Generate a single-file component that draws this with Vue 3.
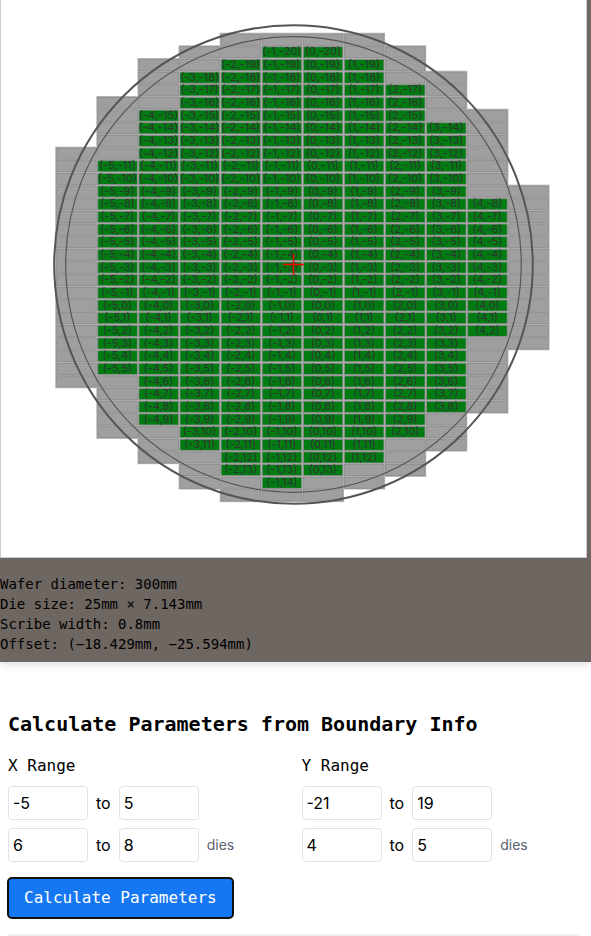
<script setup>
import { ref } from 'vue'

const center = { x: 293.5, y: 264.5 }
const origin = { x: 302.4, y: 299.1 }
const pitch = { x: 41.1, y: 12.66 }

// Rows covered by each column: all dies, then the complete ones.
const columns = [
  { i: -6, all: [-12, 6] },
  { i: -5, all: [-16, 10], full: [-11, 5] },
  { i: -4, all: [-19, 12], full: [-15, 9] },
  { i: -3, all: [-20, 14], full: [-18, 11] },
  { i: -2, all: [-21, 15], full: [-19, 13] },
  { i: -1, all: [-21, 15], full: [-20, 14] },
  { i: 0, all: [-21, 15], full: [-20, 13] },
  { i: 1, all: [-21, 14], full: [-19, 12] },
  { i: 2, all: [-20, 13], full: [-17, 10] },
  { i: 3, all: [-18, 11], full: [-14, 8] },
  { i: 4, all: [-15, 8], full: [-8, 2] },
  { i: 5, all: [-9, 3] }
]

const dies = columns.flatMap(({ i, all, full }) => {
  const list = []
  for (let j = all[0]; j <= all[1]; j++) {
    list.push({
      key: `${i},${j}`,
      x: origin.x + i * pitch.x,
      y: origin.y + j * pitch.y,
      full: Boolean(full) && j >= full[0] && j <= full[1]
    })
  }
  return list
})
const fullDies = dies.filter((d) => d.full)

const specs = [
  'Wafer diameter: 300mm',
  'Die size: 25mm × 7.143mm',
  'Scribe width: 0.8mm',
  'Offset: (−18.429mm, −25.594mm)'
]

const ranges = ref([
  { axis: 'X', rows: [{ from: '-5', to: '5' }, { from: '6', to: '8', unit: 'dies' }] },
  { axis: 'Y', rows: [{ from: '-21', to: '19' }, { from: '4', to: '5', unit: 'dies' }] }
])
</script>

<template>
  <main class="page">
    <section class="viewer">
      <svg class="wafer" viewBox="1 0 585 557" role="img" aria-label="Wafer map">
        <g>
          <rect v-for="d in dies" :key="d.key" class="scribe" :x="d.x" :y="d.y" :width="pitch.x" :height="pitch.y" />
        </g>
        <g>
          <rect
            v-for="d in dies"
            :key="d.key"
            class="die"
            :class="{ full: d.full }"
            :x="d.x + 0.9"
            :y="d.y + 0.9"
            :width="pitch.x - 1.6"
            :height="pitch.y - 1.6"
          />
        </g>
        <g class="labels">
          <text v-for="d in fullDies" :key="d.key" :x="d.x + pitch.x / 2" :y="d.y + 9.5">({{ d.key }})</text>
        </g>
        <circle class="edge" :cx="center.x" :cy="center.y" r="239.3" />
        <circle class="usable" :cx="center.x" :cy="center.y" r="227.8" />
        <path class="cross" d="M283 264.5H304M293.5 254V275" />
      </svg>
      <div class="specs">
        <p v-for="line in specs" :key="line">{{ line }}</p>
      </div>
    </section>

    <form class="boundary" @submit.prevent>
      <h2>Calculate Parameters from Boundary Info</h2>
      <div class="ranges">
        <fieldset v-for="range in ranges" :key="range.axis">
          <legend>{{ range.axis }} Range</legend>
          <div v-for="(row, n) in range.rows" :key="n" class="row">
            <input v-model="row.from" type="text" :aria-label="`${range.axis} range ${n + 1} from`" />
            <label :for="`${range.axis}-${n}`">to</label>
            <input :id="`${range.axis}-${n}`" v-model="row.to" type="text" />
            <span v-if="row.unit" class="unit">{{ row.unit }}</span>
          </div>
        </fieldset>
      </div>
      <button type="submit">Calculate Parameters</button>
      <hr />
    </form>
  </main>
</template>

<style>
body {
  background: #fff;
}
</style>

<style scoped>
.page {
  color: #000;
  font-family: Inter, sans-serif;
  font-size: 16px;
  line-height: 24px;
}

.viewer {
  background: #6e6660;
  box-shadow: 0 2px 8px rgba(0, 0, 0, 0.15);
  padding-bottom: 8px;
}

.wafer {
  box-sizing: border-box;
  display: block;
  width: calc(100% - 4px);
  background: #fff;
  border: 1px solid #c9cbd3;
  border-top: 0;
}

.scribe {
  fill: #9f9f9f;
  stroke: #b4b4b4;
  stroke-width: 1;
}

.die {
  fill: #9f9f9f;
  stroke: #8f8f8f;
  stroke-width: 0.8;
}

.die.full {
  fill: #007b12;
}

.labels {
  fill: #333;
  font-size: 11px;
  text-anchor: middle;
}

.edge,
.usable {
  fill: none;
  stroke: #555;
}

.edge {
  stroke-width: 2;
}

.usable {
  stroke-width: 1.2;
}

.cross {
  fill: none;
  stroke: #f00;
  stroke-width: 1.3;
}

.specs {
  padding-top: 16px;
  font-family: "DejaVu Sans Mono", monospace;
  font-size: 14px;
  line-height: 20px;
}

.specs p {
  margin: 0;
}

.boundary {
  padding: 48px 12px 0 8px;
}

h2 {
  margin: 0;
  font-family: "DejaVu Sans Mono", monospace;
  font-size: 20px;
  line-height: 28px;
}

.ranges {
  display: grid;
  grid-template-columns: 1fr 1fr;
  gap: 16px;
  margin: 16px 0;
}

fieldset {
  min-width: 0;
  margin: 0;
  padding: 0;
  border: 0;
}

legend {
  margin-bottom: 8px;
  padding: 0;
  font-family: "DejaVu Sans Mono", monospace;
}

.row {
  display: flex;
  align-items: center;
  gap: 8px;
}

.row + .row {
  margin-top: 8px;
}

input {
  box-sizing: border-box;
  width: 80px;
  height: 34px;
  padding: 4px;
  background: #fff;
  border: 1px solid #e1e2e8;
  border-radius: 4px;
  color: #000;
  font: inherit;
}

.unit {
  color: #596273;
  font-size: 14px;
}

button {
  display: block;
  padding: 8px 16px;
  background: #1677f2;
  border: 0;
  border-radius: 4px;
  outline: 2px solid #101010;
  outline-offset: -1px;
  color: #fff;
  font-family: "DejaVu Sans Mono", monospace;
  font-size: 16px;
  line-height: 24px;
}

hr {
  height: 2px;
  margin: 16px 0 0;
  background: #eef0f3;
  border: 0;
  border-radius: 2px;
}
</style>
